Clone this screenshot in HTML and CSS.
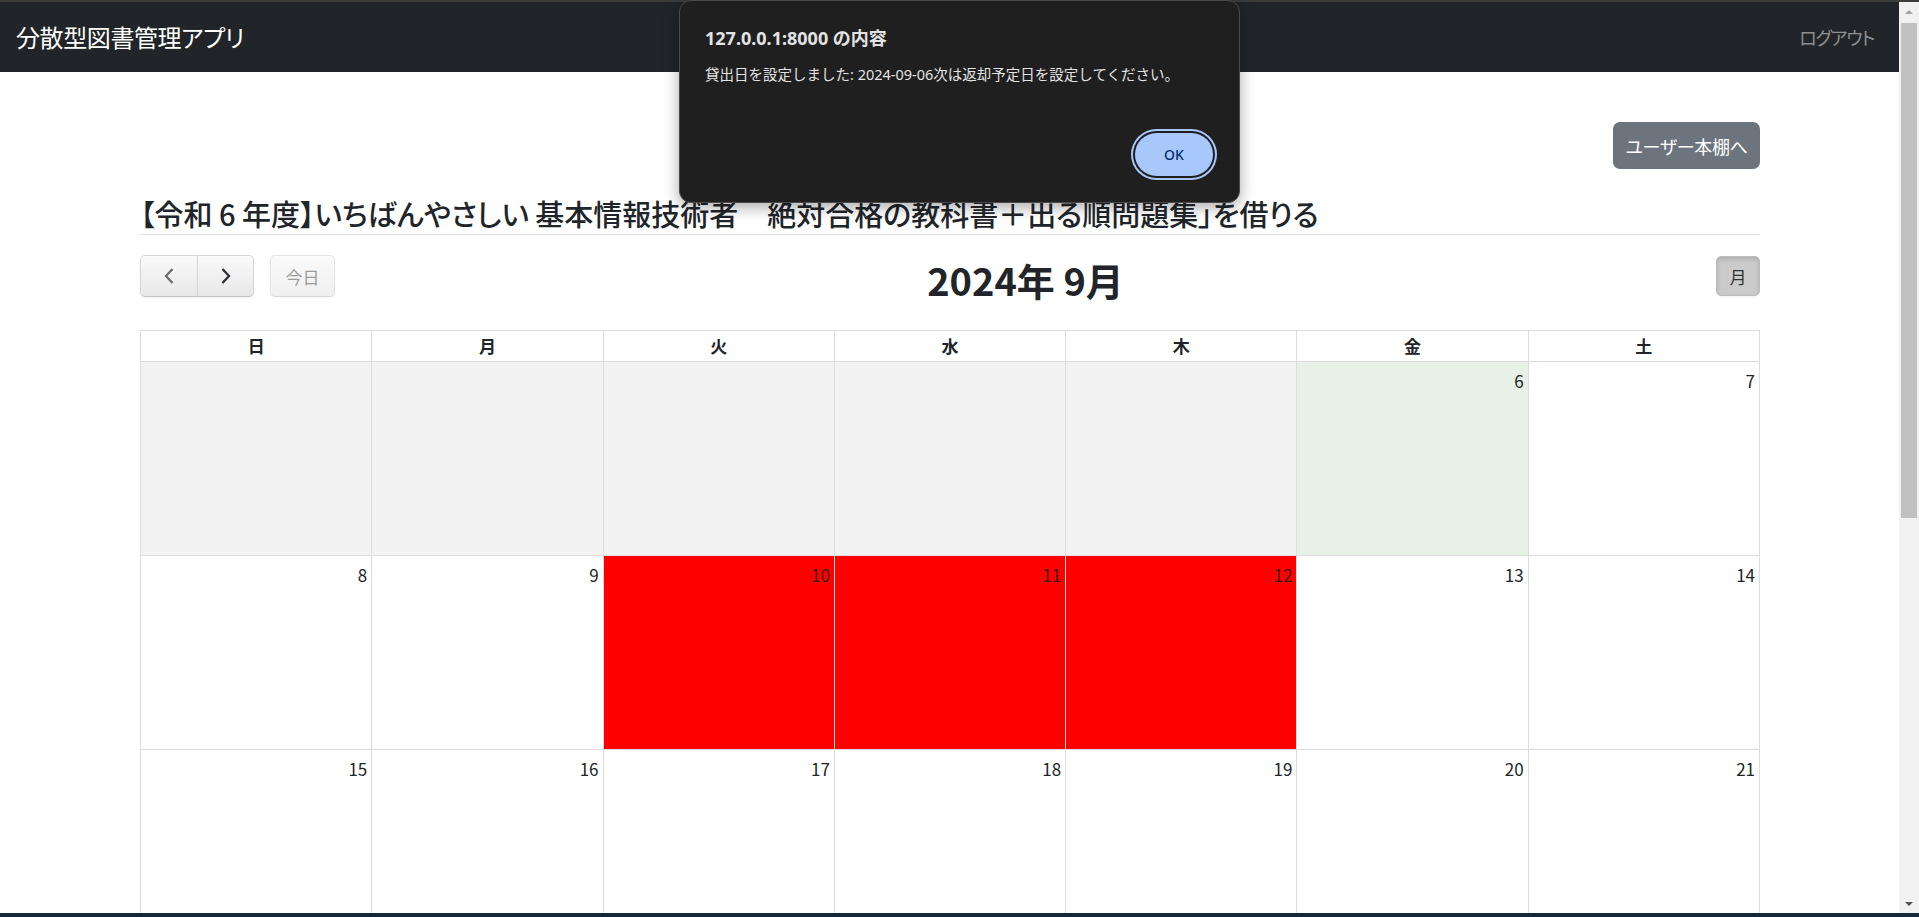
FILE: index.html
```html
<!DOCTYPE html>
<html lang="ja">
<head>
<meta charset="utf-8">
<title>分散型図書管理アプリ</title>
<link rel="stylesheet" href="styles.css">
</head>
<body>
<div class="topline"></div>
<div class="window">
  <div class="page">
    <nav class="navbar">
      <a class="brand">分散型図書管理アプリ</a>
      <a class="logout">ログアウト</a>
    </nav>
    <main class="container">
      <div class="actions">
        <a class="btn-secondary">ユーザー本棚へ</a>
      </div>
      <h4 class="book-title">【令和 6 年度】いちばんやさしい 基本情報技術者　絶対合格の教科書＋出る順問題集」を借りる</h4>
      <div class="toolbar">
        <div class="tb-left">
          <div class="btn-group">
            <button class="fc-btn fc-prev"><svg width="12" height="18" viewBox="0 0 12 18"><path d="M9.5 2 L3 9 L9.5 16" fill="none" stroke="#6a6a6a" stroke-width="2.2"/></svg></button>
            <button class="fc-btn fc-next"><svg width="12" height="18" viewBox="0 0 12 18"><path d="M2.5 2 L9 9 L2.5 16" fill="none" stroke="#2b2b33" stroke-width="2.2"/></svg></button>
          </div>
          <button class="fc-btn fc-today">今日</button>
        </div>
        <div class="tb-center"><h2 class="cal-title">2024年 9月</h2></div>
        <div class="tb-right"><button class="fc-btn fc-month">月</button></div>
      </div>
      <div class="cal">
        <div class="cal-head">
          <div class="hd">日</div><div class="hd">月</div><div class="hd">火</div><div class="hd">水</div><div class="hd">木</div><div class="hd">金</div><div class="hd">土</div>
        </div>
        <div class="cal-body">
          <div class="day past"></div><div class="day past"></div><div class="day past"></div><div class="day past"></div><div class="day past"></div>
          <div class="day today"><span class="num">6</span></div>
          <div class="day"><span class="num">7</span></div>

          <div class="day"><span class="num">8</span></div>
          <div class="day"><span class="num">9</span></div>
          <div class="day busy"><span class="num">10</span></div>
          <div class="day busy"><span class="num">11</span></div>
          <div class="day busy"><span class="num">12</span></div>
          <div class="day"><span class="num">13</span></div>
          <div class="day"><span class="num">14</span></div>

          <div class="day"><span class="num">15</span></div>
          <div class="day"><span class="num">16</span></div>
          <div class="day"><span class="num">17</span></div>
          <div class="day"><span class="num">18</span></div>
          <div class="day"><span class="num">19</span></div>
          <div class="day"><span class="num">20</span></div>
          <div class="day"><span class="num">21</span></div>
        </div>
      </div>
    </main>
  </div>
  <div class="scrollbar">
    <div class="sb-up"></div>
    <div class="sb-track"><div class="sb-thumb"></div></div>
    <div class="sb-down"></div>
  </div>
</div>
<div class="taskbar"></div>

<div class="dialog">
  <div class="dlg-title">127.0.0.1:8000 の内容</div>
  <div class="dlg-msg">貸出日を設定しました: 2024-09-06次は返却予定日を設定してください。</div>
  <div class="dlg-actions"><button class="dlg-ok">OK</button></div>
</div>
</body>
</html>
```
FILE: styles.css
```css
* { box-sizing: border-box; }
html, body { margin: 0; padding: 0; }
body {
  width: 1919px;
  height: 917px;
  overflow: hidden;
  position: relative;
  display: flex;
  flex-direction: column;
  font-family: "Noto Sans CJK JP", "Noto Sans", sans-serif;
  font-feature-settings: "palt";
  color: #212529;
  background: #fff;
}
.topline { height: 2px; background: #3c3c3c; flex: none; }
.window { height: 911px; display: flex; flex: none; }
.page { flex: 1; overflow: hidden; background: #fff; }
.taskbar { height: 4px; background: #18273a; flex: none; }

/* navbar */
.navbar {
  height: 70px;
  background: #212529;
  display: flex;
  align-items: center;
  justify-content: space-between;
  padding: 0 25px 0 16px;
}
.brand { color: #fff; font-size: 24px; letter-spacing: -0.4px; line-height: 30px; }
.logout { color: #8e9093; font-size: 18px; letter-spacing: -1.2px; line-height: 30px; }

/* container */
.container { padding: 0 139px 0 140px; }
.actions { display: flex; justify-content: flex-end; padding-top: 50px; }
.btn-secondary {
  width: 147px; height: 47px;
  background: #6c757d; color: #fff;
  border-radius: 7px;
  display: flex; align-items: center; justify-content: center;
  font-size: 18px;
  letter-spacing: -0.3px;
}
.book-title {
  margin: 26px 0 0;
  font-size: 29px;
  line-height: 36px;
  font-weight: 500;
  padding-bottom: 3px;
  border-bottom: 1px solid #dee2e6;
  white-space: nowrap;
}

/* toolbar */
.toolbar {
  display: flex;
  align-items: center;
  height: 42px;
  margin-top: 20px;
  margin-bottom: 33px;
}
.tb-left { display: flex; gap: 16px; }
.tb-center { flex: 1; text-align: center; }
.tb-right { display: flex; }
.btn-group { display: flex; }
.fc-btn {
  height: 42px;
  border: 1px solid #d6d6d6;
  border-bottom-color: #c2c2c2;
  background: linear-gradient(#f9f9f9, #e8e8e8);
  box-shadow: inset 0 1px 0 rgba(255,255,255,.3), 0 1px 2px rgba(0,0,0,.06);
  border-radius: 5px;
  font-family: inherit;
  font-size: 17px;
  color: #333;
  padding: 0;
  display: flex; align-items: center; justify-content: center;
}
.fc-prev { width: 58px; border-radius: 5px 0 0 5px; }
.fc-next { width: 57px; border-radius: 0 5px 5px 0; margin-left: -1px; }
.fc-today { width: 65px; opacity: .65; color: #666; }
.fc-month {
  width: 44px; height: 40px;
  background: #cbcbcb;
  border-color: #bdbdbd;
  box-shadow: inset 0 2px 4px rgba(0,0,0,.15), 0 1px 2px rgba(0,0,0,.05);
  font-size: 17px;
}
.cal-title {
  margin: 0;
  padding-top: 7px;
  font-size: 38px;
  line-height: 46px;
  font-weight: 700;
  color: #212529;
}

/* calendar */
.cal { border-left: 1px solid #ddd; border-top: 1px solid #ddd; }
.cal-head, .cal-body { display: grid; grid-template-columns: repeat(7, 1fr); }
.hd {
  height: 31px;
  line-height: 30px;
  text-align: center;
  font-weight: 700;
  font-size: 17px;
  border-right: 1px solid #ddd;
  border-bottom: 1px solid #ddd;
}
.day {
  height: 194px;
  border-right: 1px solid #ddd;
  border-bottom: 1px solid #ddd;
  text-align: right;
  padding: 6px 4px 0 0;
}
.num { font-size: 17px; line-height: 26px; color: #212529; }
.day.past { background: #f2f2f2; }
.day.today { background: #e8f1e6; }
.day.busy { background: #ff0000; border-right-color: #f0e0e0; }
.day.busy .num { color: #3a1a1a; }

/* scrollbar */
.scrollbar { width: 20px; background: #f1f1f1; display: flex; flex-direction: column; }
.sb-up, .sb-down { height: 19px; display: flex; align-items: center; justify-content: center; }
.sb-up::before {
  content: ""; border-left: 4px solid transparent; border-right: 4px solid transparent;
  border-bottom: 4px solid #a3a3a3;
}
.sb-down::before {
  content: ""; border-left: 4px solid transparent; border-right: 4px solid transparent;
  border-top: 4px solid #505050;
}
.sb-track { flex: 1; padding: 2px 2px 0 2px; }
.sb-thumb { height: 495px; background: #c1c1c1; }

/* dialog */
.dialog {
  position: absolute;
  left: 679px;
  top: 0;
  width: 561px;
  height: 203px;
  background: #1f1f1f;
  border: 1px solid #4a4a4a;
  border-radius: 12px;
  box-shadow: 0 4px 16px rgba(0,0,0,.35);
  padding: 24px 22px 22px 25px;
  display: flex;
  flex-direction: column;
  color: #e3e3e3;
  font-family: "Noto Sans", "Noto Sans CJK JP", sans-serif;
  font-feature-settings: normal;
}
.dlg-title { font-size: 18px; font-weight: 700; line-height: 26px; }
.dlg-msg { font-size: 14.5px; line-height: 22px; margin-top: 12px; white-space: nowrap; }
.dlg-actions { margin-top: auto; display: flex; justify-content: flex-end; }
.dlg-ok {
  width: 78px; height: 43px;
  margin: 4px;
  border: none;
  border-radius: 22px;
  background: #a8c7fa;
  color: #062e6f;
  font-family: inherit;
  font-size: 14px;
  font-weight: 500;
  box-shadow: 0 0 0 2px #1f1f1f, 0 0 0 4px #a8c7fa;
}
```
